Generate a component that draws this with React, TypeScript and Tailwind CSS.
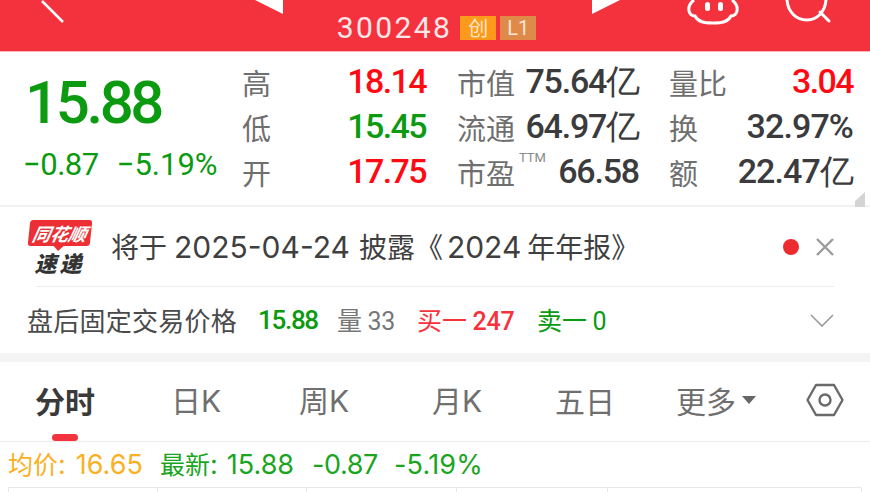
import React from "react";

const GREEN = "text-[#0b9a10]";
const RED = "text-[#ff0a12]";
const DARK = "text-[#3b3b3d]";
const LABEL = "text-[#6f6f6f]";

const tabs = [
  { label: "日", w: "w-[128px]" },
  { label: "周", w: "w-[133px]" },
  { label: "月", w: "w-[123px]" },
];

function Header() {
  return (
    <div className="relative h-[52px] overflow-hidden border-b border-[#f9b4b8] bg-[#f3323e]">
      <div className="flex h-[51px] items-center justify-center gap-[8px] pt-[4px] pl-[3px]">
        <span className="font-['Roboto'] text-[30px] leading-none tracking-[2.4px] text-[#fde6e7]">300248</span>
        <span className="flex h-[24px] w-[36px] items-center justify-center bg-[#fd9a1c] text-[20px] leading-none text-[#fde9c9]">创</span>
        <span className="-ml-[4px] flex h-[24px] w-[36px] items-center justify-center bg-[#e08a4a] font-['Roboto'] text-[20px] leading-none text-[#fbe7d5]">L1</span>
      </div>
      {/* top icons, cut off by the screen edge */}
      <svg className="absolute left-0 top-0" width="870" height="51" fill="none" stroke="#fff">
        <path d="M42 1 L63 22" strokeWidth="2.5" />
        <path d="M255 0 L283 14 V0 Z" fill="#fff" stroke="none" />
        <path d="M592 14 L620 0 H592 Z" fill="#fff" stroke="none" />
        <path d="M694 0 C686 6 688 16 695 16 C698 22 704 23 713 23 C722 23 728 22 731 16 C738 16 740 6 732 0" strokeWidth="3" />
        <rect x="705" y="2" width="5" height="9" rx="2.5" fill="#fff" stroke="none" />
        <rect x="718" y="2" width="5" height="9" rx="2.5" fill="#fff" stroke="none" />
        <path d="M787 0 C788 12 796 20 807 20 C817 20 825 12 826 0" strokeWidth="3" />
        <path d="M820 12 L829 21" strokeWidth="3" strokeLinecap="round" />
      </svg>
    </div>
  );
}

function Stat({ label, value, color, sup }: { label: string; value: string; color: string; sup?: boolean }) {
  return (
    <div className="flex h-[45px] items-center justify-between">
      <span className={`relative text-[29px] leading-none tracking-normal ${LABEL}`}>
        {label}
        {sup && <span className="absolute left-[62px] -top-[7px] font-['Roboto'] text-[13px] leading-none text-[#8a8a8a]">TTM</span>}
      </span>
      <span className={`-mt-[3px] mr-[1px] font-['Roboto'] text-[34px] font-medium leading-none ${color}`}>{value}</span>
    </div>
  );
}

function Quote() {
  return (
    <div className="relative flex h-[155px] border-b-2 border-[#f2f2f2] pt-[8px]">
      <div className={`w-[242px] pl-[23px] ${GREEN}`}>
        <div className="mt-[15px] pl-[2px] font-['Roboto'] text-[60px] font-medium leading-[56px] tracking-[-3.4px]">15.88</div>
        <div className="mt-[18px] flex gap-[18px] whitespace-nowrap font-['Roboto'] text-[31px] leading-[32px]">
          <span className="tracking-[-0.5px]">−0.87</span>
          <span>−5.19%</span>
        </div>
      </div>
      <div className="w-[185px] tracking-[-1.6px]">
        <Stat label="高" value="18.14" color={RED} />
        <Stat label="低" value="15.45" color={GREEN} />
        <Stat label="开" value="17.75" color={RED} />
      </div>
      <div className="ml-[30px] w-[183px] tracking-[-1.2px]">
        <Stat label="市值" value="75.64亿" color={DARK} />
        <Stat label="流通" value="64.97亿" color={DARK} />
        <Stat label="市盈" value="66.58" color={DARK} sup />
      </div>
      <div className="ml-[29px] w-[185px] tracking-[-0.9px]">
        <div className="tracking-[-1.6px]">
          <Stat label="量比" value="3.04" color={RED} />
        </div>
        <Stat label="换" value="32.97%" color={DARK} />
        <Stat label="额" value="22.47亿" color={DARK} />
      </div>
      <svg className="absolute left-[855px] top-[140px]" width="11" height="15">
        <path d="M0 9 L10 0 V15 H0 Z" fill="#d4d4d4" />
      </svg>
    </div>
  );
}

function Logo() {
  return (
    <div className="flex h-[54px] w-[65px] flex-col items-center">
      <div className="relative flex h-[26px] w-[62px] -skew-x-[6deg] items-center justify-center rounded-[3px] bg-[#ec2f35]">
        <span className="skew-x-[-6deg] whitespace-nowrap text-[18px] font-bold italic leading-none text-white">同花顺</span>
        <span className="absolute -bottom-[5px] left-[26px] h-0 w-0 border-x-[5px] border-t-[5px] border-x-transparent border-t-[#ec2f35]" />
      </div>
      <span className="mt-[4px] whitespace-nowrap text-[22px] font-black italic leading-[24px] tracking-[3px] text-[#333]">速递</span>
    </div>
  );
}

function Notice() {
  return (
    <div className="h-[146px]">
      <div className="flex h-[79px] items-center pl-[27px] pr-[36px]">
        <Logo />
        <span className="ml-[19px] flex-1 whitespace-nowrap font-['Inter','Noto_Sans_CJK_SC',sans-serif] text-[30px] leading-none text-[#3f3f3f]">
          <span className="text-[28px]">将于</span>
          <span className="ml-[7px]">2025-04-24</span>
          <span className="ml-[9px] text-[28px]">披露《</span>
          <span className="ml-[4px]">2024</span>
          <span className="ml-[6px] text-[28px]">年年报》</span>
        </span>
        <span className="h-[16px] w-[16px] rounded-full bg-[#ec2b2f]" />
        <svg className="ml-[17px]" width="18" height="18" viewBox="0 0 18 18" stroke="#9b9b9b" strokeWidth="2.4" fill="none">
          <path d="M1 1 L17 17 M17 1 L1 17" />
        </svg>
      </div>
      <div className="mx-[36px] h-px bg-[#ededed]" />
      <div className="flex h-[66px] items-center pl-[27px] pr-[36px] text-[25px] leading-none">
        <span className="w-[231px] whitespace-nowrap text-[26px] tracking-[0.25px] text-[#4a4a4a]">盘后固定交易价格</span>
        <span className={`w-[79px] font-['Roboto'] text-[26px] font-medium tracking-[-1.3px] ${GREEN}`}>15.88</span>
        <span className="w-[80px] whitespace-nowrap text-[#777]">量 <span className="font-['Roboto'] tracking-[-0.5px]">33</span></span>
        <span className="w-[120px] whitespace-nowrap text-[#f5333d]">买一 <span className="font-['Roboto'] font-medium tracking-[-0.3px]">247</span></span>
        <span className={`flex-1 whitespace-nowrap ${GREEN}`}>卖一 <span className="font-['Roboto']">0</span></span>
        <svg width="24" height="13" viewBox="0 0 24 13" fill="none" stroke="#9a9a9a" strokeWidth="1.6">
          <path d="M1 1 L12 12 L23 1" />
        </svg>
      </div>
    </div>
  );
}

function Tabs() {
  return (
    <div className="relative flex h-[80px] items-center border-b border-[#ececec] pb-[3px] pl-[35px] text-[30px] leading-none text-[#6f6f6f]">
      <span className="w-[136px] font-bold text-[#3a3a3a]">分时</span>
      {tabs.map((t) => (
        <span key={t.label} className={t.w}>
          {t.label}
          <span className="font-['Inter']">K</span>
        </span>
      ))}
      <span className="w-[121px]">五日</span>
      <span className="flex w-[130px] items-center">
        更多
        <span className="ml-[6px] h-0 w-0 border-x-[7px] border-t-[8px] border-x-transparent border-t-[#666]" />
      </span>
      <svg width="38" height="34" viewBox="0 0 38 34" fill="none" stroke="#6a6a6a" strokeWidth="2.4">
        <path d="M1.5 17 L10 2 H28 L36.5 17 L28 32 H10 Z" strokeLinejoin="round" />
        <circle cx="19" cy="17" r="5.5" />
      </svg>
      <span className="absolute bottom-0 left-[52px] h-[7px] w-[26px] rounded-full bg-[#f5333d]" />
    </div>
  );
}

function Legend() {
  return (
    <div className="flex h-[45px] items-center whitespace-nowrap pl-[8px] font-['Inter','Noto_Sans_CJK_SC',sans-serif] text-[27px] leading-none text-[#1aa51e]">
      <span className="w-[152px] text-[#fbb023]">
        <span className="text-[25px]">均价</span>:<span className="ml-[10px]">16.65</span>
      </span>
      <span className="w-[152px]">
        <span className="text-[25px]">最新</span>:<span className="ml-[9px]">15.88</span>
      </span>
      <span className="w-[82px] tracking-[-0.4px]">-0.87</span>
      <span className="tracking-[0.2px]">-5.19%</span>
    </div>
  );
}

function ChartTop() {
  return (
    <div className="mx-[8px] grid h-[5px] grid-cols-[149px_149px_150px_151px_254px] border-x border-t border-[#e8e8e8]">
      <div className="border-r border-[#e8e8e8]" />
      <div className="border-r border-[#e8e8e8]" />
      <div className="border-r border-[#e8e8e8]" />
      <div className="border-r border-[#e8e8e8]" />
      <div />
    </div>
  );
}

export default function App() {
  return (
    <div className="h-[492px] w-[870px] overflow-hidden bg-white font-['Noto_Sans_CJK_SC',sans-serif]">
      <Header />
      <Quote />
      <Notice />
      <div className="h-[9px] bg-[#f4f4f4]" />
      <Tabs />
      <Legend />
      <ChartTop />
    </div>
  );
}
